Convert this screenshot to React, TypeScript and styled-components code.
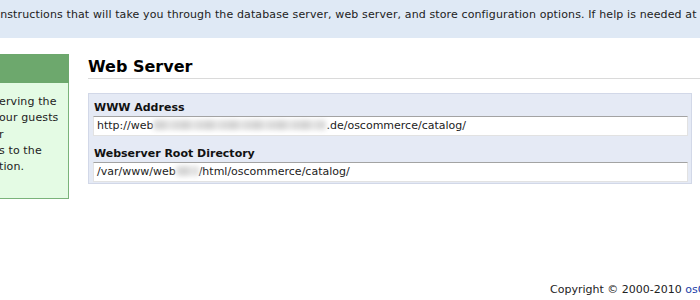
import styled, { createGlobalStyle } from "styled-components";

const GlobalStyle = createGlobalStyle`
  html, body {
    margin: 0;
    padding: 0;
    background: #ffffff;
    overflow: hidden;
  }
  body {
    font-family: "DejaVu Sans", Verdana, sans-serif;
    font-size: 11px;
    color: #222;
  }
`;

const sideLines = ["erving the", "our guests", "r", "s to the", "tion."];

const App = () => {
  return (
    <>
      <GlobalStyle />
      <Page>
        <IntroBand>
          <IntroText>
            instructions that will take you through the database server, web server, and store configuration options. If help is needed at any stage, please consult the documentation or seek help at the community support forums.
          </IntroText>
        </IntroBand>
        <Content>
          <Sidebar>
            <SideHeader />
            <SideBody>
              {sideLines.map((line) => (
                <SideLine key={line}>{line}</SideLine>
              ))}
            </SideBody>
          </Sidebar>
          <Main>
            <Title>Web Server</Title>
            <FormBox>
              <Field>
                <Label>WWW Address</Label>
                <Input>
                  http://web<Smudge $w={173} />.de/oscommerce/catalog/
                </Input>
              </Field>
              <Field>
                <Label>Webserver Root Directory</Label>
                <Input>
                  /var/www/web<Smudge $w={23} />/html/oscommerce/catalog/
                </Input>
              </Field>
            </FormBox>
          </Main>
        </Content>
        <Footer>
          Copyright &copy; 2000-2010 <FooterLink href="#">osCommerce</FooterLink>
        </Footer>
      </Page>
    </>
  );
};

export default App;

const Page = styled.div`
  width: 700px;
  height: 300px;
  overflow: hidden;
`;

const IntroBand = styled.div`
  background: #dfe9f5;
  height: 38px;
  padding-top: 8px;
  box-sizing: border-box;
  white-space: nowrap;
  overflow: hidden;
`;

const IntroText = styled.div`
  margin-left: -3px;
  line-height: 14px;
  letter-spacing: 0.12px;
  color: #222;
`;

const Content = styled.div`
  display: flex;
  margin-top: 16px;
`;

const Sidebar = styled.div`
  width: 69px;
  flex-shrink: 0;
`;

const SideHeader = styled.div`
  height: 29px;
  background: #6da86d;
  border-right: 1px solid #6da86d;
`;

const SideBody = styled.div`
  background: #e4fbe4;
  border-right: 1px solid #7ab37a;
  border-bottom: 1px solid #7ab37a;
  padding: 11px 0 23px;
  line-height: 16.3px;
  white-space: nowrap;
  overflow: hidden;
`;

const SideLine = styled.div`
  margin-left: -1px;
  letter-spacing: 0.12px;
  color: #222;
`;

const Main = styled.div`
  flex: 1;
  margin-left: 19px;
  min-width: 0;
`;

const Title = styled.h1`
  margin: 0;
  font-family: "DejaVu Sans", Verdana, sans-serif;
  font-size: 16px;
  font-weight: bold;
  color: #000;
  line-height: 20px;
  padding: 3px 0 1px;
  border-bottom: 1px solid #dadada;
`;

const FormBox = styled.div`
  margin-top: 14px;
  width: 595px;
  background: #e5eaf5;
  border: 1px solid #d2d8e8;
  padding: 4px 3px 1px 4px;
  display: flex;
  flex-direction: column;
  gap: 8px;
`;

const Field = styled.div`
  display: flex;
  flex-direction: column;
`;

const Label = styled.div`
  font-weight: bold;
  color: #111;
  line-height: 14px;
  padding-left: 1px;
  margin-top: 3px;
`;

const Input = styled.div`
  margin-top: 1px;
  height: 18px;
  line-height: 18px;
  background: #ffffff;
  border: 1px solid #e2e2e2;
  border-top-color: #a3a3a3;
  padding-left: 3px;
  color: #222;
  white-space: nowrap;
  overflow: hidden;
`;

const Smudge = styled.span<{ $w: number }>`
  display: inline-block;
  vertical-align: middle;
  width: ${(p) => p.$w}px;
  height: 10px;
  margin-top: -2px;
  border-radius: 3px;
  background: repeating-linear-gradient(
    90deg,
    #dedede 0px,
    #d2d2d2 9px,
    #e6e6e6 16px,
    #d8d8d8 24px
  );
  filter: blur(2.5px);
`;

const Footer = styled.div`
  margin-top: 84px;
  padding-left: 550px;
  white-space: nowrap;
  line-height: 14px;
  color: #222;
`;

const FooterLink = styled.a`
  color: #1d3fa8;
  text-decoration: none;
`;
